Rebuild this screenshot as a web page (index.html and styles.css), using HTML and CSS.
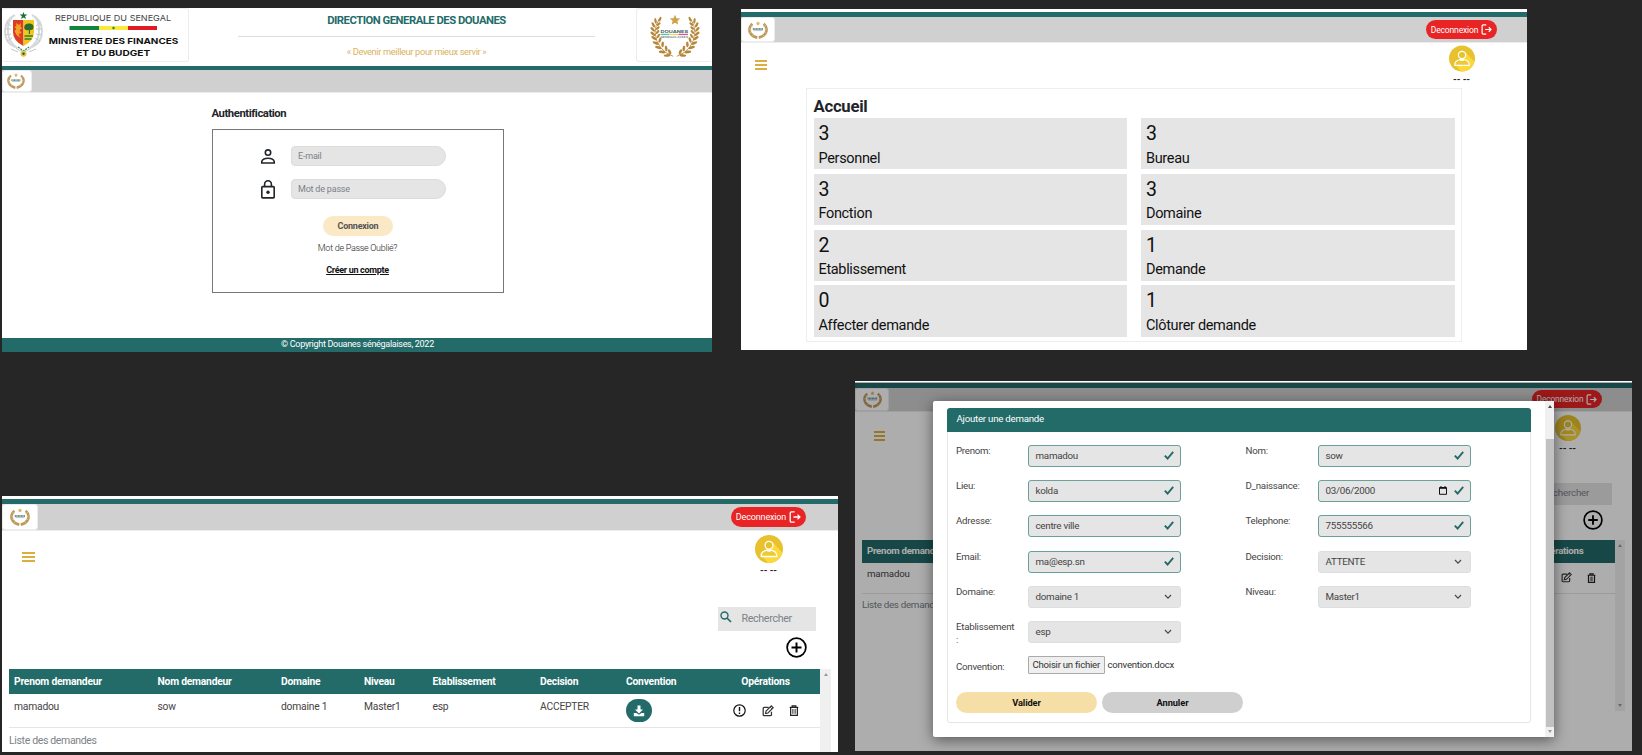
FILE: index.html
```html
<!DOCTYPE html>
<html lang="fr">
<head>
<meta charset="utf-8">
<title>Douanes sénégalaises</title>
<link rel="stylesheet" href="styles.css">
</head>
<body>
<svg class="defs" width="0" height="0">
  <symbol id="half" viewBox="0 0 50 50" overflow="visible">
    <path d="M24 47 Q5 40 3.500 20 Q3.500 12 8 5" fill="none" stroke="#b98b3c" stroke-width="1"/>
    <g fill="#b5873a">
      <ellipse cx="9" cy="5" rx="1.3" ry="2.900" transform="rotate(25 9 5)"/>
      <ellipse cx="4" cy="7" rx="1.3" ry="3.3" transform="rotate(-8 4 7)"/>
      <ellipse cx="7.500" cy="10.500" rx="1.3" ry="2.700" transform="rotate(50 7.500 10.500)"/>
      <ellipse cx="1.500" cy="11.500" rx="1.4" ry="3.3" transform="rotate(-28 1.500 11.500)"/>
      <ellipse cx="6.500" cy="15" rx="1.3" ry="2.600" transform="rotate(50 6.500 15)"/>
      <ellipse cx=".8" cy="16.500" rx="1.4" ry="3.3" transform="rotate(-45 .8 16.500)"/>
      <ellipse cx="6.300" cy="19.500" rx="1.3" ry="2.600" transform="rotate(42 6.300 19.500)"/>
      <ellipse cx="1" cy="21.500" rx="1.4" ry="3.4" transform="rotate(-52 1 21.500)"/>
      <ellipse cx="7.200" cy="24" rx="1.3" ry="2.800" transform="rotate(30 7.200 24)"/>
      <ellipse cx="2.300" cy="26.500" rx="1.5" ry="3.5" transform="rotate(-58 2.300 26.500)"/>
      <ellipse cx="9" cy="28.500" rx="1.4" ry="3.1" transform="rotate(18 9 28.500)"/>
      <ellipse cx="4.200" cy="32" rx="1.5" ry="3.7" transform="rotate(-65 4.200 32)"/>
      <ellipse cx="12" cy="33.500" rx="1.5" ry="3.3" transform="rotate(5 12 33.500)"/>
      <ellipse cx="7.200" cy="37" rx="1.6" ry="3.8" transform="rotate(-72 7.200 37)"/>
      <ellipse cx="16" cy="38" rx="1.5" ry="3.4" transform="rotate(-8 16 38)"/>
      <ellipse cx="11.500" cy="42" rx="1.6" ry="3.8" transform="rotate(-82 11.500 42)"/>
      <ellipse cx="20" cy="42" rx="1.500" ry="3.2" transform="rotate(-25 20 42)"/>
      <ellipse cx="17" cy="46" rx="1.500" ry="3.7" transform="rotate(-95 17 46)"/>
    </g>
  </symbol>
  <symbol id="laurel" viewBox="-3 -2 58 52">
    <use href="#half" width="50" height="50"/>
    <g transform="translate(52 0) scale(-1 1)"><use href="#half" width="50" height="50"/></g>
    <path d="M26 0l1.700 3.800 4.100.4-3.100 2.800.9 4.100-3.600-2.100-3.600 2.100.9-4.100-3.100-2.800 4.100-.4z" fill="#cda24a"/>
  </symbol>
  <symbol id="mini" viewBox="0 0 20 18">
    <g fill="none" stroke="#bd9a5c" stroke-width="2.600">
      <path d="M4.300 2.800Q-.2 7 2.300 12Q4.500 15.800 9.300 16.600"/>
      <path d="M15.700 2.800Q20.200 7 17.700 12Q15.500 15.800 10.700 16.600"/>
    </g>
    <path d="M2.200 4.500l3 1.500M1 8l2.800.7M1.700 11.500l2.500-.8M4 14.800l2-1.600M17.800 4.500l-3 1.500M19 8l-2.800.7M18.300 11.500l-2.500-.8M16 14.800l-2-1.600" stroke="#e2d2b2" stroke-width=".6"/>
    <path d="M10 .3l.7 1.200 1.400.3-1 1.100.1 1.400-1.200-.5-1.200.5.1-1.400-1-1.100 1.400-.3z" fill="#dcb35a"/>
    <path d="M4.800 8h10.400" stroke="#6d8a8c" stroke-width="2" stroke-dasharray="1.100 .4"/>
    <path d="M5.500 9.600h9" stroke="#a3b8b4" stroke-width=".8"/>
  </symbol>
  <symbol id="exit" viewBox="0 0 20 20">
    <path d="M9.500 1.500H4Q2 1.500 2 3.500v13q0 2 2 2h5.500M7.500 10H18M14.200 6l4 4-4 4" fill="none" stroke="#fff" stroke-width="2.200"/>
  </symbol>
  <symbol id="avatar" viewBox="0 0 28 28">
    <circle cx="14" cy="14" r="14" fill="#e7c22e"/>
    <path d="M17.500 7L27.200 17.500A14 14 0 0 1 13 28L7 21z" fill="#fdd83a"/>
    <g stroke="#fff" stroke-width="1.300">
      <path d="M6.200 21.500c-.3-4 2-6.200 7.800-6.700 5.800.5 8.100 2.700 7.800 6.700z" fill="#efc931" stroke-linejoin="round"/>
      <circle cx="14" cy="10.300" r="3.900" fill="#e7c22e"/>
      <path d="M11.500 15q2.500 2.200 5 0" fill="none"/>
    </g>
  </symbol>
  <symbol id="plus" viewBox="0 0 24 24">
    <path d="M12 6.300v11.400M6.300 12h11.400" stroke="#000" stroke-width="2.200"/>
    <circle cx="12" cy="12" r="10.700" fill="none" stroke="#000" stroke-width="2"/>
  </symbol>
  <symbol id="edit" viewBox="0 0 18 18">
    <path d="M10 3.500H3.300Q1.800 3.500 1.800 5v9.500q0 1.500 1.500 1.500h9.400q1.500 0 1.500-1.500V10" fill="none" stroke="#333" stroke-width="1.900"/>
    <path d="M14 1.300l2.800 2.800-7.900 7.900-3.600.8.8-3.600z" fill="#fff" fill-opacity=".4" stroke="#333" stroke-width="1.700"/>
    <path d="M12.200 3.200l2.700 2.700" stroke="#333" stroke-width="1.300"/>
  </symbol>
  <symbol id="trash" viewBox="0 0 16 18">
    <path d="M1 4h14M5 4V1.500h6V4M2.500 4v12.800h11V4" fill="none" stroke="#222" stroke-width="2"/>
    <path d="M5.700 6.500v8M8 6.500v8M10.300 6.500v8" stroke="#444" stroke-width="1.300"/>
  </symbol>
  <symbol id="check" viewBox="0 0 10 9"><path d="M.8 4.600l2.800 2.900L9.200.9" fill="none" stroke="#236b69" stroke-width="1.900"/></symbol>
  <symbol id="chev" viewBox="0 0 8 6"><path d="M1 1l3 3.200L7 1" fill="none" stroke="#454a4e" stroke-width="1.200"/></symbol>
</svg>

<section class="win login">
  <header class="brand">
    <div class="ministry">
      <svg width="186" height="54" viewBox="0 0 186 54">
        <g fill="none" stroke="#d5d8da">
          <path d="M13 6Q3 11 3 22Q3 34 13 38M10 8Q5 14 6 24Q7 33 15 39" stroke-width="2"/>
          <path d="M30 6Q40 11 40 22Q40 34 30 38M33 8Q38 14 37 24Q36 33 28 39" stroke-width="2"/>
          <path d="M5 14l4 3M3 20h6M3 26l6-1M5 32l5-3M38 14l-4 3M40 20h-6M40 26l-6-1M38 32l-5-3M9 40l7 3M34 40l-7 3M14 39q7 7 15 0" stroke="#c4c8ca"/>
        </g>
        <path d="M11 11h10.500v26Q11 32 11 23z" fill="#dd3b24"/>
        <path d="M21.500 11H32v12q0 9-10.500 14z" fill="#f2c51c"/>
        <path d="M14 14l3 2 2-2-.5 4 2 1-3 2 2 3-3 1 2 4-4-3-2-4 2-2-2-2 2-1z" fill="#f0a22b"/>
        <path d="M26.800 25v-4q-5 .8-4.600-3 .5-3.700 4.800-3.500 4.500-.2 4.500 3.500 0 3.500-3.500 3v4z" fill="#2e6b2e"/>
        <path d="M22.500 27h8.500M22.500 30h7" stroke="#27803d" stroke-width="1.300"/>
        <path d="M21.500 3l1 2.500 2.900.1-2.300 1.700.9 2.700-2.500-1.600-2.500 1.600.9-2.700-2.300-1.700 2.900-.1z" fill="#17713a"/>
        <path d="M16 38l5.500 4 5.500-4" fill="none" stroke="#3a8a50" stroke-width="1.200" stroke-dasharray="2 1"/>
        <circle cx="21.500" cy="44.800" r="3" fill="#e2c545"/><circle cx="21.500" cy="44.800" r="1.200" fill="#2c5c35"/>
        <g font-family="Inter" fill="#444">
          <text x="53" y="12" font-size="8" textLength="116" lengthAdjust="spacingAndGlyphs">REPUBLIQUE DU SENEGAL</text>
          <g font-weight="700" fill="#111" font-size="8">
            <text x="46.800" y="35.200" textLength="129.500" lengthAdjust="spacingAndGlyphs">MINISTERE DES FINANCES</text>
            <text x="74.200" y="46.700" textLength="74" lengthAdjust="spacingAndGlyphs">ET DU BUDGET</text>
          </g>
        </g>
        <path d="M67.500 17h29.500v4H67.500z" fill="#12853f"/><path d="M97 17h29v4H97z" fill="#fbe83c"/><path d="M126 17h29v4h-29z" fill="#e01b24"/>
        <circle cx="111.500" cy="19" r="1.200" fill="#12853f"/>
      </svg>
    </div>
    <div class="direction">
      <h1>DIRECTION GENERALE DES DOUANES</h1>
      <p>« Devenir meilleur pour mieux servir »</p>
    </div>
    <div class="douanes">
      <svg width="54" height="46" viewBox="0 0 54 46">
        <use href="#laurel" x="0" y="0" width="54" height="46"/>
        <rect x="12.500" y="20.800" width="9" height="1.300" fill="#54c69a"/><rect x="21.500" y="20.800" width="9" height="1.300" fill="#e8d86a"/><rect x="30.500" y="20.800" width="9.500" height="1.300" fill="#d9568c"/>
        <text x="12.500" y="20.300" font-family="Inter" font-size="4" font-weight="700" fill="#46616a" textLength="27.500" lengthAdjust="spacingAndGlyphs">DOUANES</text>
        <text x="12.500" y="24.600" font-family="Inter" font-size="2.600" font-weight="700" fill="#7c888c" textLength="27.500" lengthAdjust="spacingAndGlyphs">SENEGALAISES</text>
      </svg>
    </div>
  </header>
  <nav class="bar"><span class="tab"><svg width="18" height="16"><use href="#mini"/></svg></span></nav>
  <main class="auth">
    <h2>Authentification</h2>
    <form class="authbox">
      <div class="field"><svg width="16" height="20" viewBox="0 0 16 20"><circle cx="8" cy="6.600" r="2.700" fill="none" stroke="#212529" stroke-width="1.600"/><path d="M1.800 17v-1.600Q2.500 12.200 8 12.200t6.200 3.200V17z" fill="none" stroke="#212529" stroke-width="1.600"/></svg><span class="input">E-mail</span></div>
      <div class="field"><svg width="16" height="20" viewBox="0 0 16 20"><rect x="1.800" y="7.600" width="12.400" height="11.300" rx=".8" fill="none" stroke="#212529" stroke-width="1.600"/><path d="M4.600 7.500V5.200a3.400 3.400 0 0 1 6.800 0v2.300" fill="none" stroke="#212529" stroke-width="1.600"/><circle cx="8" cy="13.200" r="1.700" fill="#212529"/></svg><span class="input">Mot de passe</span></div>
      <span class="connect">Connexion</span>
      <span class="forgot">Mot de Passe Oublié?</span>
      <span class="create">Créer un compte</span>
    </form>
  </main>
  <footer class="copy">© Copyright Douanes sénégalaises, 2022</footer>
</section>

<section class="win home">
  <nav class="bar"><span class="tab"><svg width="20" height="18"><use href="#mini"/></svg></span><span class="logout">Deconnexion<svg width="11" height="11"><use href="#exit"/></svg></span></nav>
  <div class="userrow"><span class="burger"><i></i><i></i><i></i></span><span class="user"><svg width="26" height="27"><use href="#avatar"/></svg><b>-- --</b></span></div>
  <main class="dash">
    <h2>Accueil</h2>
    <div class="tiles">
      <div class="tile"><b>3</b><span>Personnel</span></div><div class="tile"><b>3</b><span>Bureau</span></div>
      <div class="tile"><b>3</b><span>Fonction</span></div><div class="tile"><b>3</b><span>Domaine</span></div>
      <div class="tile"><b>2</b><span>Etablissement</span></div><div class="tile"><b>1</b><span>Demande</span></div>
      <div class="tile"><b>0</b><span>Affecter demande</span></div><div class="tile"><b>1</b><span>Clôturer demande</span></div>
    </div>
  </main>
</section>

<section class="win list">
  <nav class="bar"><span class="tab"><svg width="20" height="18"><use href="#mini"/></svg></span><span class="logout">Deconnexion<svg width="12" height="12"><use href="#exit"/></svg></span></nav>
  <div class="userrow"><span class="burger"><i></i><i></i><i></i></span><span class="user"><svg width="28" height="28"><use href="#avatar"/></svg><b>-- --</b></span></div>
  <div class="search"><svg width="12" height="12" viewBox="0 0 12 12"><circle cx="4.500" cy="4.500" r="3.500" fill="none" stroke="#236b69" stroke-width="1.400"/><path d="M7 7l4 4" stroke="#236b69" stroke-width="1.700"/></svg><span>Rechercher</span></div>
  <div class="add"><svg width="21" height="21"><use href="#plus"/></svg></div>
  <div class="tablewrap">
    <div class="table">
      <div class="tr th"><span>Prenom demandeur</span><span>Nom demandeur</span><span>Domaine</span><span>Niveau</span><span>Etablissement</span><span>Decision</span><span>Convention</span><span class="ops">Opérations</span></div>
      <div class="tr td"><span>mamadou</span><span>sow</span><span>domaine 1</span><span>Master1</span><span>esp</span><span>ACCEPTER</span>
        <span class="dl"><svg width="12" height="12" viewBox="0 0 12 12"><path d="M4.500.5h3v4H10L6 8.400 2 4.500h2.500z" fill="#fff"/><path d="M.8 8h2.700L6 9.700 8.500 8h2.700v3.300H.8z" fill="#fff"/></svg></span>
        <span class="ops icons"><svg width="13" height="13" viewBox="0 0 13 13"><circle cx="6.500" cy="6.500" r="5.700" fill="none" stroke="#111" stroke-width="1.200"/><path d="M6.500 3v4.300M6.500 8.600v1.400" stroke="#111" stroke-width="1.400"/></svg><svg width="12" height="12"><use href="#edit"/></svg><svg width="10" height="11"><use href="#trash"/></svg></span></div>
      <p class="caption">Liste des demandes</p>
    </div>
    <div class="scroll"><i class="up"></i></div>
  </div>
</section>

<section class="win popup">
  <nav class="bar"><span class="tab"><svg width="19" height="17"><use href="#mini"/></svg></span><span class="logout">Deconnexion<svg width="11" height="11"><use href="#exit"/></svg></span></nav>
  <div class="userrow"><span class="burger"><i></i><i></i><i></i></span><span class="user"><svg width="26" height="26"><use href="#avatar"/></svg><b>-- --</b></span></div>
  <div class="search"><span>Rechercher</span></div>
  <div class="add"><svg width="20" height="20"><use href="#plus"/></svg></div>
  <div class="tablewrap">
    <div class="table">
      <div class="tr th"><span>Prenom demandeur</span><span class="ops">Opérations</span></div>
      <div class="tr td"><span>mamadou</span><span class="ops icons"><svg width="11" height="11"><use href="#edit"/></svg><svg width="9" height="10"><use href="#trash"/></svg></span></div>
      <p class="caption">Liste des demandes</p>
    </div>
    <div class="scroll"><i class="up"></i><i class="down"></i></div>
  </div>
  <div class="shade"></div>
  <div class="modal">
    <div class="card">
      <h3>Ajouter une demande</h3>
      <div class="form">
        <label>Prenom:</label><span class="ctl ok">mamadou<svg width="10" height="9"><use href="#check"/></svg></span>
        <label>Nom:</label><span class="ctl ok">sow<svg width="10" height="9"><use href="#check"/></svg></span>
        <label>Lieu:</label><span class="ctl ok">kolda<svg width="10" height="9"><use href="#check"/></svg></span>
        <label>D_naissance:</label><span class="ctl ok">03/06/2000<svg class="cal" width="8" height="9" viewBox="0 0 8 9"><path d="M.5 1.500h7v6.800h-7zM.5 2.300h7M2 0v2M6 0v2" fill="none" stroke="#111"/></svg><svg width="10" height="9"><use href="#check"/></svg></span>
        <label>Adresse:</label><span class="ctl ok">centre ville<svg width="10" height="9"><use href="#check"/></svg></span>
        <label>Telephone:</label><span class="ctl ok">755555566<svg width="10" height="9"><use href="#check"/></svg></span>
        <label>Email:</label><span class="ctl ok">ma@esp.sn<svg width="10" height="9"><use href="#check"/></svg></span>
        <label>Decision:</label><span class="ctl">ATTENTE<svg width="8" height="6"><use href="#chev"/></svg></span>
        <label>Domaine:</label><span class="ctl">domaine 1<svg width="8" height="6"><use href="#chev"/></svg></span>
        <label>Niveau:</label><span class="ctl">Master1<svg width="8" height="6"><use href="#chev"/></svg></span>
        <label>Etablissement<br>:</label><span class="ctl">esp<svg width="8" height="6"><use href="#chev"/></svg></span>
        <label></label><span></span>
        <label class="conv">Convention:</label><span class="file"><em>Choisir un fichier</em>convention.docx</span>
      </div>
      <div class="actions"><span class="go">Valider</span><span class="no">Annuler</span></div>
    </div>
    <div class="scroll"><i class="up"></i><i class="thumb"></i><i class="down"></i></div>
  </div>
</section>
</body>
</html>
```
FILE: styles.css
```css
*{box-sizing:border-box;margin:0;padding:0}
body{position:relative;width:1642px;height:755px;overflow:hidden;background:#262626;font-family:Roboto,sans-serif;color:#212529}
svg{display:block;flex:none}
.defs{position:absolute}
.win{position:absolute;background:#fff;overflow:hidden;display:flex;flex-direction:column}
.bar{display:flex;align-items:center;flex:none;background:#d0d0d0;border-top:5px solid #236b69;border-bottom:1px solid #ececec}
.tab{display:flex;align-items:center;justify-content:center;align-self:stretch;background:#fff;border:1px solid #ececec;border-radius:3px}
.logout{display:flex;align-items:center;justify-content:center;gap:3px;margin-left:auto;background:#e82424;color:#fff;border-radius:10px;white-space:nowrap}
.userrow{display:flex;justify-content:space-between;flex:none}
.burger{display:flex;flex-direction:column;gap:2.200px}
.burger i{height:2px;background:#dcae3e}
.user{display:flex;flex-direction:column;align-items:center}
.user b{color:#222;white-space:nowrap;font-size:9.500px;line-height:13px;letter-spacing:-.1px}
.scroll{display:flex;flex-direction:column;align-items:center;justify-content:space-between;background:#f0f0f0}
.up{border:2px solid transparent;border-top:0;border-bottom:3px solid #999}
.down{border:2px solid transparent;border-bottom:0;border-top:3px solid #999}

/* login window */
.login{left:2px;top:8px;width:710px;height:343.500px}
.brand{display:flex;justify-content:space-between;height:58px;flex:none}
.ministry{width:187px;height:54px;border:1px solid #ececec;border-left:0;border-radius:3px}
.direction{width:357px;margin-right:-8px;text-align:center;white-space:nowrap}
.direction h1{height:29px;border-bottom:1px solid #ddd;font-size:11.300px;line-height:25px;font-weight:700;letter-spacing:-.5px;color:#236b69}
.direction p{font-size:9.300px;line-height:29px;letter-spacing:-.36px;color:#dbb25c}
.douanes{width:76px;height:54px;border:1px solid #ececec;border-right:0;border-radius:3px;padding:4px 0 0 11px}
.login .bar{height:27px;border-top-width:4px}
.login .tab{width:30px;padding-right:3px}
.auth{display:flex;flex-direction:column;padding-left:209.500px;flex:1}
.auth h2{font-size:11.300px;line-height:16px;letter-spacing:-.44px;margin:13px 0 7px}
.authbox{display:flex;flex-direction:column;width:292px;height:164px;border:1px solid #777;padding:16px 0 0 47.500px}
.field{display:flex;height:20px;margin-bottom:13px;gap:15px}
.input{width:155px;height:20px;border:1px solid #dcdcdc;border-radius:4px 10px 10px 4px;background:#e5e5e5;color:#7b8288;font-size:9px;letter-spacing:-.2px;line-height:18px;padding-left:6px}
.connect{margin:4px 0 0 63px;width:70px;height:20px;border-radius:10px;background:#fae9c4;color:#555;font-size:9px;letter-spacing:-.25px;font-weight:700;line-height:20px;text-align:center}
.forgot{width:195px;font-size:9px;letter-spacing:-.28px;font-weight:300;line-height:14px;margin-top:5px;text-align:center;color:#222}
.create{width:195px;font-size:9px;letter-spacing:-.3px;font-weight:700;line-height:14px;margin-top:8px;text-align:center;text-decoration:underline;color:#111}
.copy{height:13.500px;background:#236b69;color:#fff;font-size:9px;letter-spacing:-.3px;line-height:13px;text-align:center;padding-left:1px}

/* home window */
.home{left:741px;top:9px;width:786px;height:341px;padding-top:3px}
.home .bar{height:31px}
.home .tab{width:34px}
.home .logout{width:71px;height:19px;margin-right:30px;font-size:8.500px;letter-spacing:-.15px}
.home .userrow{height:45px;padding:17px 52.500px 0 14px}
.home .burger{width:12px}
.home .user{margin-top:-15px}
.dash{width:656px;height:254px;margin-left:65px;border:1px solid #eee;padding:7px 6px 0 6.500px}
.dash h2{font-size:16.700px;line-height:21px;letter-spacing:-.25px}
.tiles{display:grid;grid-template-columns:313.500px 313.500px;grid-auto-rows:51.300px;gap:4.500px 14px;margin-top:1px}
.tile{display:flex;flex-direction:column;background:#e5e5e5;padding:5px 5px 0;color:#111}
.tile b{font-weight:400;font-size:19.500px;line-height:22px;letter-spacing:-.8px}
.tile span{font-size:14.500px;line-height:18px;margin-top:4.500px;letter-spacing:-.34px}

/* request list window */
.list{left:2px;top:496px;width:836px;height:256px;padding-top:3px}
.list .bar{height:32px}
.list .tab{width:36px}
.list .logout{width:75px;height:20px;margin-right:32px;font-size:9px;letter-spacing:-.15px}
.list .userrow{height:76px;padding:21px 55.500px 0 20px}
.list .burger{width:13px}
.list .user{margin-top:-17px}
.search{display:flex;background:#e5e5e5;color:#7b8288;align-self:flex-end;flex:none}
.list .search{width:98px;height:23.500px;margin-right:22px;padding:4px 2px;gap:9.500px;font-size:10.700px;letter-spacing:-.34px;line-height:15px}
.add{align-self:flex-end;flex:none}
.list .add{margin:6.500px 31px 0 0;height:32px}
.tablewrap{display:flex;flex:1}
.list .tablewrap{padding:0 7px}
.table{flex:1}
.tr{display:grid;white-space:nowrap}
.th{background:#236b69;color:#fff;font-weight:700}
.list .tr{grid-template-columns:143.500px 123.500px 83px 68.500px 107.500px 86px 90px 1fr;padding-left:5px;font-size:10.300px;letter-spacing:-.22px}
.list .th{line-height:26px;height:25px}
.list .td{height:34px;line-height:25px;color:#444;border-bottom:1px solid #e5e5e5}
.ops{text-align:center}
.list .th .ops{padding-right:5px}
.dl{display:flex;width:26px;height:23px;margin-top:5px;border-radius:12px;background:#236b69;align-items:center;justify-content:center}
.icons{display:flex;align-items:center}
.list .icons{gap:15.500px;padding-left:17px;height:33px}
.caption{color:#7b8288}
.list .caption{font-size:10.500px;letter-spacing:-.35px;line-height:25px}
.list .scroll{width:11px;padding-top:4px}

/* request popup window */
.popup{left:855px;top:381px;width:777px;height:370px;padding-top:1.500px}
.popup .bar{height:29px}
.popup .tab{width:34px}
.popup .logout{width:70px;height:18px;margin-right:30px;font-size:8.300px;letter-spacing:-.1px}
.popup .userrow{height:71px;padding:19px 51.500px 0 19px}
.popup .burger{width:11px}
.popup .user{margin-top:-16px}
.popup .search{width:90px;height:22px;margin-right:20px;padding-left:20px;font-size:9.800px;letter-spacing:-.2px;line-height:20px}
.popup .add{margin:5px 29px 0 0;height:30px}
.popup .tablewrap{flex:none;padding:0 7px;height:171px}
.popup .tr{grid-template-columns:1fr 108px;padding-left:5px;font-size:9.700px;letter-spacing:-.3px}
.popup .th{height:23px;line-height:22px}
.popup .td{height:31px;line-height:22px;color:#444;border-bottom:1px solid #e5e5e5;letter-spacing:-.15px}
.popup .icons{gap:15px;padding-left:54px}
.popup .caption{font-size:9.800px;letter-spacing:-.3px;line-height:22px}
.popup .tablewrap .scroll{width:10px;padding:4px 0}
.shade{position:absolute;left:0;top:1px;right:0;bottom:0;background:rgba(0,0,0,.32)}
.modal{position:absolute;left:78px;top:20px;width:621px;height:336px;background:#fff;border-radius:2px;box-shadow:0 3px 14px rgba(0,0,0,.5);display:flex;justify-content:space-between;padding-left:14px}
.card{width:584px;height:315px;margin-top:7px;border:1px solid #e5e5e5;border-radius:3px}
.card h3{height:24px;margin:-1px -1px 0;padding-left:9.500px;background:#236b69;border-radius:3px 3px 0 0;color:#fff;font-size:9.700px;letter-spacing:-.24px;line-height:22px;font-weight:400}
.form{display:grid;grid-template-columns:71.500px 218px 72px 153px;grid-auto-rows:35.200px;padding:13px 0 0 8px}
.form label{font-size:9.700px;letter-spacing:-.24px;line-height:13.500px;margin-top:-1px;color:#444}
.ctl{display:flex;align-items:center;width:153px;height:22px;border:1px solid #dcdfe1;border-radius:3px;background:#e5e5e5;padding:0 6px 1px 7px;color:#444;font-size:9.800px;letter-spacing:-.27px}
.ok{border-color:#69a19b}
.ctl svg:last-child{margin-left:auto}
.ctl:not(.ok) svg:last-child{margin:2px 2px 0 auto}
.ctl .cal{margin-left:auto}
.ctl .cal + svg:last-child{margin-left:7px}
.form .conv{padding-top:4.500px}
.file{display:flex;font-size:9.600px;letter-spacing:-.25px;line-height:17px;color:#333;white-space:nowrap}
.file em{font-style:normal;width:77.500px;height:18px;border:1px solid #aaa;background:#efefef;border-radius:1px;text-align:center;margin-right:2.500px;line-height:16px}
.actions{display:flex;gap:5px;padding:.5px 0 0 8px;font-size:9.300px;letter-spacing:-.1px;font-weight:700;color:#111;text-align:center;line-height:21.500px}
.actions span{width:141px;height:21.500px;border-radius:11px}
.go{background:#f6dfa6}
.no{background:#cfcfcf}
.modal .scroll{width:9px;padding:4px 0}
.modal .scroll .up{border-bottom-color:#444}
.thumb{width:8px;height:288px;background:#c1c1c1;margin-top:auto;margin-bottom:3px}
```
